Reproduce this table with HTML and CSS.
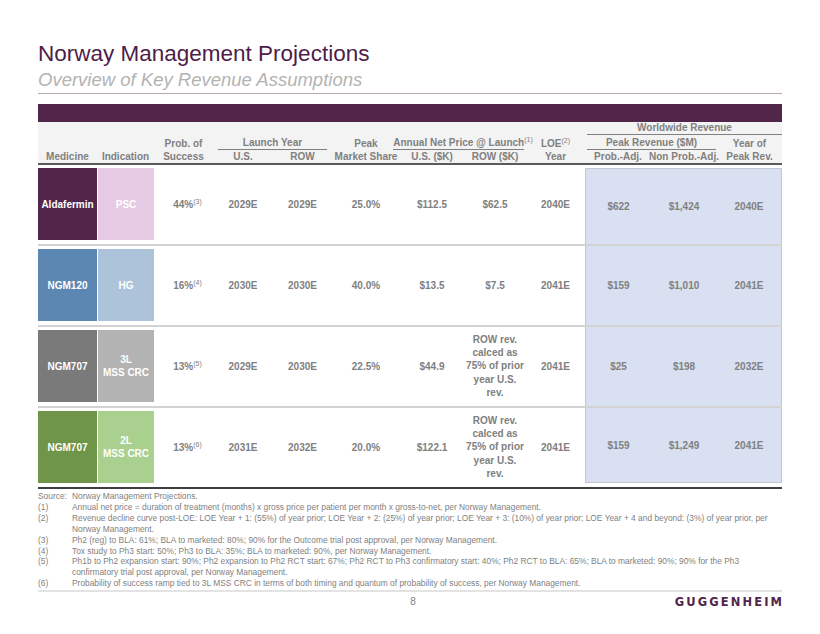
FILE: index.html
```html
<!DOCTYPE html>
<html>
<head>
<meta charset="utf-8">
<title>Norway Management Projections</title>
<link rel="stylesheet" href="styles.css">
</head>
<body>
<div class="slide">
  <h1 class="title">Norway Management Projections</h1>
  <h2 class="subtitle">Overview of Key Revenue Assumptions</h2>
  <div class="bar"></div>

  <div class="thead">
    <div class="h ww">Worldwide Revenue</div>

    <div class="h r2 c3">Prob. of</div>
    <div class="h r2 launch">Launch Year</div>
    <div class="h r2 c6">Peak</div>
    <div class="h r2 anp"><span><span class="ul">Annual Net Price @ Launch</span><sup>(1)</sup></span></div>
    <div class="h r2 c9"><span>LOE<sup>(2)</sup></span></div>
    <div class="h r2 peakrev">Peak Revenue ($M)</div>
    <div class="h r2 c12">Year of</div>

    <div class="h r3">Medicine</div>
    <div class="h r3">Indication</div>
    <div class="h r3">Success</div>
    <div class="h r3">U.S.</div>
    <div class="h r3">ROW</div>
    <div class="h r3">Market Share</div>
    <div class="h r3">U.S. ($K)</div>
    <div class="h r3">ROW ($K)</div>
    <div class="h r3">Year</div>
    <div class="h r3">Prob.-Adj.</div>
    <div class="h r3">Non Prob.-Adj.</div>
    <div class="h r3">Peak Rev.</div>
  </div>

  <div class="tbody">
    <div class="row first">
      <div class="cell med purple">Aldafermin</div>
      <div class="cell ind pink">PSC</div>
      <div class="cell pct"><span>44%<sup>(3)</sup></span></div>
      <div class="cell">2029E</div>
      <div class="cell">2029E</div>
      <div class="cell">25.0%</div>
      <div class="cell">$112.5</div>
      <div class="cell">$62.5</div>
      <div class="cell">2040E</div>
      <div class="cell blue bl">$622</div>
      <div class="cell blue">$1,424</div>
      <div class="cell blue br">2040E</div>
    </div>
    <div class="row">
      <div class="cell med steel">NGM120</div>
      <div class="cell ind lightsteel">HG</div>
      <div class="cell pct"><span>16%<sup>(4)</sup></span></div>
      <div class="cell">2030E</div>
      <div class="cell">2030E</div>
      <div class="cell">40.0%</div>
      <div class="cell">$13.5</div>
      <div class="cell">$7.5</div>
      <div class="cell">2041E</div>
      <div class="cell blue bl">$159</div>
      <div class="cell blue">$1,010</div>
      <div class="cell blue br">2041E</div>
    </div>
    <div class="row">
      <div class="cell med gray">NGM707</div>
      <div class="cell ind lightgray"><span>3L<br>MSS CRC</span></div>
      <div class="cell pct"><span>13%<sup>(5)</sup></span></div>
      <div class="cell">2029E</div>
      <div class="cell">2030E</div>
      <div class="cell">22.5%</div>
      <div class="cell">$44.9</div>
      <div class="cell multi"><span>ROW rev.<br>calced as<br>75% of prior<br>year U.S.<br>rev.</span></div>
      <div class="cell">2041E</div>
      <div class="cell blue bl">$25</div>
      <div class="cell blue">$198</div>
      <div class="cell blue br">2032E</div>
    </div>
    <div class="row last">
      <div class="cell med green">NGM707</div>
      <div class="cell ind lightgreen"><span>2L<br>MSS CRC</span></div>
      <div class="cell pct"><span>13%<sup>(6)</sup></span></div>
      <div class="cell">2031E</div>
      <div class="cell">2032E</div>
      <div class="cell">20.0%</div>
      <div class="cell">$122.1</div>
      <div class="cell multi"><span>ROW rev.<br>calced as<br>75% of prior<br>year U.S.<br>rev.</span></div>
      <div class="cell">2041E</div>
      <div class="cell blue bl">$159</div>
      <div class="cell blue">$1,249</div>
      <div class="cell blue br">2041E</div>
    </div>
  </div>

  <div class="notes">
    <span class="num">Source:</span><span class="txt">Norway Management Projections.</span>
    <span class="num">(1)</span><span class="txt">Annual net price = duration of treatment (months) x gross price per patient per month x gross-to-net, per Norway Management.</span>
    <span class="num">(2)</span><span class="txt">Revenue decline curve post-LOE: LOE Year + 1: (55%) of year prior; LOE Year + 2: (25%) of year prior; LOE Year + 3: (10%) of year prior; LOE Year + 4 and beyond: (3%) of year prior, per<br>Norway Management.</span>
    <span class="num">(3)</span><span class="txt">Ph2 (reg) to BLA: 61%; BLA to marketed: 80%; 90% for the Outcome trial post approval, per Norway Management.</span>
    <span class="num">(4)</span><span class="txt">Tox study to Ph3 start: 50%; Ph3 to BLA: 35%; BLA to marketed: 90%, per Norway Management.</span>
    <span class="num">(5)</span><span class="txt">Ph1b to Ph2 expansion start: 90%; Ph2 expansion to Ph2 RCT start: 67%; Ph2 RCT to Ph3 confirmatory start: 40%; Ph2 RCT to BLA: 65%; BLA to marketed: 90%; 90% for the Ph3<br>confirmatory trial post approval, per Norway Management.</span>
    <span class="num">(6)</span><span class="txt">Probability of success ramp tied to 3L MSS CRC in terms of both timing and quantum of probability of success, per Norway Management.</span>
  </div>

  <div class="footer">
    <span class="spacer"></span>
    <span class="page">8</span>
    <span class="logo">GUGGENHEIM</span>
  </div>
</div>
</body>
</html>
```

FILE: styles.css
```css
html, body {
  margin: 0;
  padding: 0;
  background: #ffffff;
}

body {
  font-family: "Liberation Sans", Arial, sans-serif;
}

.slide {
  width: 744px;
  padding: 41px 38px 0;
}

.title {
  margin: 0;
  font-size: 22.5px;
  line-height: 26px;
  font-weight: 400;
  color: #4e1d47;
}

.subtitle {
  margin: 2px 0 0;
  padding-bottom: 2px;
  font-size: 18.5px;
  line-height: 22px;
  font-weight: 400;
  font-style: italic;
  color: #b3b3b3;
  border-bottom: 1px solid #b9a6b5;
}

.bar {
  margin-top: 10px;
  height: 18px;
  background: #52264b;
}

.thead,
.row {
  display: grid;
  grid-template-columns: 59px 57px 59px 60px 59px 68px 64px 62px 59px 66px 66px 65px;
}

.thead {
  grid-template-rows: 13px 15px 13px;
  background: #f3f3f3;
  border-bottom: 2px solid #5a5a5a;
  font-size: 10px;
  font-weight: 700;
  color: #808080;
}

.h {
  display: flex;
  align-items: flex-end;
  justify-content: center;
  line-height: 12px;
  white-space: nowrap;
}

.ww {
  grid-row: 1;
  grid-column: 10 / 13;
  margin-left: 2px;
  border-bottom: 1px solid #808080;
}

.r2 { grid-row: 2; }
.r3 { grid-row: 3; }

.c3 { grid-column: 3; }
.c6 { grid-column: 6; }
.c9 { grid-column: 9; }
.c12 { grid-column: 12; }

.launch {
  grid-column: 4 / 6;
  margin: 0 5px;
  border-bottom: 1px solid #808080;
}

.anp {
  grid-column: 7 / 9;
}

.anp .ul {
  display: inline-block;
  border-bottom: 1px solid #808080;
}

.peakrev {
  grid-column: 10 / 12;
  margin-left: 2px;
  margin-right: 1px;
  border-bottom: 1px solid #808080;
}

sup {
  font-size: 7px;
  font-weight: 400;
  line-height: 0;
  vertical-align: 4px;
}

.tbody {
  font-size: 10px;
  font-weight: 700;
  color: #808080;
}

.row {
  grid-template-rows: 72px;
  padding: 3px 0 4px;
  border-bottom: 2px solid #d3d3d3;
}

.row.last {
  border-bottom: 2px solid #3f3f3f;
}

.cell {
  display: flex;
  align-items: center;
  justify-content: center;
  text-align: center;
  line-height: 13px;
}

.multi {
  line-height: 13.3px;
}

.pct {
  white-space: nowrap;
}

.pct sup {
  margin-right: -8px;
}

.med,
.ind {
  color: #ffffff;
}

.ind {
  margin-left: 1px;
}

.purple { background: #52264b; }
.pink { background: #e6c9e3; }
.steel { background: #5b87b2; }
.lightsteel { background: #adc3da; }
.gray { background: #7a7a7a; }
.lightgray { background: #b3b3b3; }
.green { background: #6f9548; }
.lightgreen { background: #a9d08e; }

.blue {
  background: #d9e0f1;
  margin: -3px 0 -4px;
}

.first .blue {
  margin-top: 0;
  border-top: 1px solid #c2c7d4;
}

.last .blue {
  margin-bottom: 0;
  border-bottom: 1px solid #c2c7d4;
}

.blue.bl { border-left: 1px solid #c2c7d4; }
.blue.br { border-right: 1px solid #c2c7d4; }

.notes {
  margin-top: 2px;
  display: grid;
  grid-template-columns: 34px 1fr;
  font-size: 8.4px;
  line-height: 10.9px;
  color: #7f7f7f;
  padding-bottom: 1px;
  border-bottom: 2px solid #e3e3e3;
}

.footer {
  margin-top: 4px;
  display: grid;
  grid-template-columns: 1fr auto 1fr;
  align-items: center;
  line-height: 12px;
}

.page {
  font-size: 10px;
  color: #808080;
  padding-left: 6px;
}

.logo {
  justify-self: end;
  font-family: "DejaVu Sans", sans-serif;
  font-size: 11.5px;
  font-weight: 700;
  letter-spacing: 2.1px;
  margin-right: -2.1px;
  color: #52264b;
}
```
